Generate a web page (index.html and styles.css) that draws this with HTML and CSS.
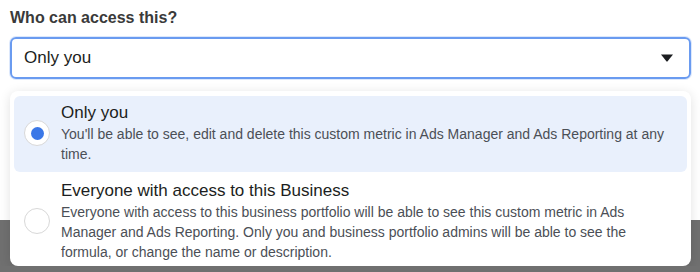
FILE: index.html
```html
<!DOCTYPE html>
<html>
<head>
  <title>Who can access this?</title>
  <link rel="stylesheet" href="styles.css">
</head>
<body>
  <div class="backdrop"></div>
  <div class="container">
    <div class="field-label">Who can access this?</div>
    <div class="select">
      <span>Only you</span>
      <svg class="caret" width="12" height="8" viewBox="0 0 12 8"><path d="M0 0.5 H12 L6.6 7.3 Q6 8 5.4 7.3 Z" fill="#1c1e21"/></svg>
    </div>
    <div class="menu">
      <div class="option selected">
        <div class="radio"><div class="dot"></div></div>
        <div class="option-text">
          <div class="option-title">Only you</div>
          <div class="option-desc">You'll be able to see, edit and delete this custom metric in Ads Manager and Ads Reporting at any time.</div>
        </div>
      </div>
      <div class="option last">
        <div class="radio"></div>
        <div class="option-text">
          <div class="option-title">Everyone with access to this Business</div>
          <div class="option-desc">Everyone with access to this business portfolio will be able to see this custom metric in Ads Manager and Ads Reporting. Only you and business portfolio admins will be able to see the formula, or change the name or description.</div>
        </div>
      </div>
    </div>
  </div>
</body>
</html>
```

FILE: styles.css
```css
body {
  margin: 0;
  font-family: "Liberation Sans", Arial, sans-serif;
  color: #1c1e21;
  background: #fff;
  overflow: hidden;
}

.backdrop {
  position: absolute;
  left: 0;
  right: 0;
  top: 220px;
  bottom: 0;
  background: #707070;
}

.container {
  position: relative;
  padding: 8px 9px 0 10px;
}

.field-label {
  font-size: 16px;
  font-weight: bold;
  color: #3a3a3a;
  line-height: 20px;
  margin-bottom: 9px;
}

.select {
  display: flex;
  align-items: center;
  justify-content: space-between;
  height: 38px;
  border: 2px solid #6a9bf0;
  border-radius: 6px;
  padding: 0 16px 0 12px;
  font-size: 17px;
  color: #1c1e21;
  box-shadow: 0 0 0 1px #dce8fc;
}

.menu {
  margin-top: 12px;
  background: #fff;
  border-radius: 8px;
  padding: 5px 4px 2px;
  box-shadow: 0 2px 12px rgba(0, 0, 0, 0.12);
}

.option {
  display: flex;
  align-items: center;
  padding: 8px 12px 8px 10px;
  border-radius: 6px;
}

.option.selected {
  background: #e9f0fc;
  padding-top: 6px;
  padding-bottom: 8px;
}

.option.last {
  padding-bottom: 2px;
}

.radio {
  flex: none;
  width: 26px;
  height: 26px;
  box-sizing: border-box;
  border: 1.5px solid #d8d8d8;
  border-radius: 50%;
  background: #fff;
  display: flex;
  align-items: center;
  justify-content: center;
  margin-right: 11px;
}

.dot {
  width: 13px;
  height: 13px;
  border-radius: 50%;
  background: #3b78e7;
}

.option-title {
  font-size: 17px;
  line-height: 22px;
  color: #1c1e21;
}

.option-desc {
  font-size: 14px;
  line-height: 20px;
  color: #4b4f56;
}
```
